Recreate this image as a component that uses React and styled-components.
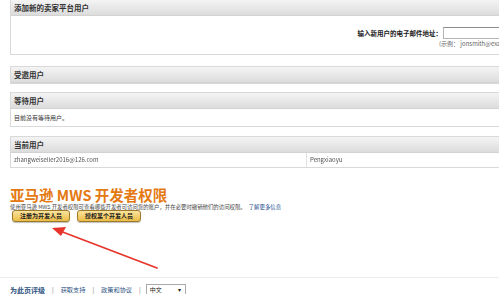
import React from "react";
import styled, { createGlobalStyle } from "styled-components";

const Global = createGlobalStyle`
  html, body { margin: 0; padding: 0; background: #fff; overflow: hidden; }
  body { font-family: "Noto Sans CJK SC", "Noto Sans", sans-serif; color: #333; }
`;

const Page = styled.div`
  position: relative;
  width: 499px;
  height: 294px;
  overflow: hidden;
`;

const Content = styled.div`
  margin-top: -1px;
  padding-left: 10px;
  width: 560px;
`;

const Panel = styled.div`
  border: 1px solid #d9d9d9;
  margin-bottom: ${(p) => p.$gap}px;
`;

const PanelHeader = styled.div`
  height: 15px;
  line-height: 15px;
  padding-left: 3px;
  background: linear-gradient(#f4f4f4, #dcdcdc);
  border-bottom: 1px solid #d2d2d2;
  font-size: 7.5px;
  font-weight: 700;
  color: #333;
`;

const PanelBody = styled.div`
  height: ${(p) => p.$h}px;
  padding-left: 3px;
  font-size: 6px;
  line-height: ${(p) => p.$h}px;
  color: #333;
`;

const FormBody = styled.div`
  height: 38px;
  padding: 11px 0 0 345px;
  box-sizing: border-box;
  display: grid;
  grid-template-columns: 87px 120px;
  grid-template-rows: 11px 10px;
  align-items: center;
`;

const FormLabel = styled.span`
  font-size: 6.5px;
  font-weight: 700;
  text-align: right;
  color: #222;
  white-space: nowrap;
  padding-right: 1px;
`;

const EmailInput = styled.div`
  height: 10px;
  border: 1px solid #b5b5b5;
  border-top-color: #8d8d8d;
  background: #fff;
`;

const Example = styled.span`
  grid-column: 2;
  margin-left: -4px;
  font-size: 6px;
  color: #666;
  white-space: nowrap;
`;

const UserRow = styled.div`
  display: grid;
  grid-template-columns: 295px 1fr;
  height: 14px;
  font-size: 6px;
`;

const UserCell = styled.div`
  padding-left: 3px;
  line-height: 14px;
  border-left: ${(p) => (p.$divider ? "1px solid #e2e2e2" : "none")};
`;

const Blurred = styled.span`
  filter: blur(0.7px);
  color: #555;
`;

const Title = styled.h1`
  margin: 19px 0 0 0;
  font-size: 14.5px;
  line-height: 16px;
  font-weight: 700;
  color: #e47911;
  font-family: "Noto Sans CJK SC", "Noto Sans", sans-serif;
`;

const Desc = styled.p`
  margin: 1px 0 0 0;
  height: 6px;
  font-size: 5.4px;
  line-height: 6px;
  color: #444;
  white-space: nowrap;
`;

const Link = styled.a`
  color: #1a4c8e;
  text-decoration: none;
  margin-left: 3px;
`;

const Buttons = styled.div`
  display: flex;
  gap: 7px;
  padding-left: 2px;
`;

const Button = styled.button`
  height: 12px;
  padding: 0 7px;
  border: 1px solid #9c7a2c;
  border-radius: 3px;
  background: linear-gradient(#fbe39d, #ecbd45);
  box-shadow: 0 1px 1px rgba(0, 0, 0, 0.25);
  font-family: "Noto Sans CJK SC", "Noto Sans", sans-serif;
  font-size: 6px;
  font-weight: 700;
  line-height: 10px;
  color: #222;
  white-space: nowrap;
`;

const Footer = styled.div`
  margin: 55px 0 0 -10px;
  border-top: 1px solid #ececec;
  padding: 5px 0 0 10px;
  display: flex;
  align-items: center;
  height: 13px;
  font-size: 6.2px;
`;

const FooterLink = styled.a`
  color: #2b4f80;
  font-weight: ${(p) => (p.$bold ? 700 : 400)};
  font-size: ${(p) => (p.$bold ? 7 : 6.2)}px;
  text-decoration: none;
`;

const Sep = styled.span`
  color: #777;
  margin: 0 7px;
`;

const Select = styled.div`
  width: 40px;
  height: 12px;
  margin-left: -2px;
  border: 1px solid #a9a9a9;
  box-sizing: border-box;
  display: flex;
  align-items: center;
  justify-content: space-between;
  padding: 0 4px 0 3px;
  font-size: 6px;
  color: #222;
`;

const Arrow = styled.svg`
  position: absolute;
  left: 0;
  top: 0;
  pointer-events: none;
`;

export default function App() {
  return (
    <Page>
      <Global />
      <Content>
        <Panel $gap={11}>
          <PanelHeader>添加新的卖家平台用户</PanelHeader>
          <FormBody>
            <FormLabel>输入新用户的电子邮件地址：</FormLabel>
            <EmailInput />
            <Example>(示例： jonsmith@example.com)</Example>
          </FormBody>
        </Panel>
        <Panel $gap={8}>
          <PanelHeader>受邀用户</PanelHeader>
        </Panel>
        <Panel $gap={9}>
          <PanelHeader>等待用户</PanelHeader>
          <PanelBody $h={17}>目前没有等待用户。</PanelBody>
        </Panel>
        <Panel $gap={0}>
          <PanelHeader>当前用户</PanelHeader>
          <UserRow>
            <UserCell>
              <Blurred>zhangweiseller2016@126.com</Blurred>
            </UserCell>
            <UserCell $divider>
              <Blurred>Pengxiaoyu</Blurred>
            </UserCell>
          </UserRow>
        </Panel>
        <Title>亚马逊 MWS 开发者权限</Title>
        <Desc>
          使用亚马逊 MWS 开发者权限可查看哪些开发者可访问您的账户，并在必要时撤销他们的访问权限。
          <Link>了解更多信息</Link>
        </Desc>
        <Buttons>
          <Button>注册为开发人员</Button>
          <Button>授权某个开发人员</Button>
        </Buttons>
        <Footer>
          <FooterLink $bold>为此页评级</FooterLink>
          <Sep>|</Sep>
          <FooterLink>获取支持</FooterLink>
          <Sep>|</Sep>
          <FooterLink>政策和协议</FooterLink>
          <Sep>|</Sep>
          <Select>
            <span>中文</span>
            <span>▾</span>
          </Select>
        </Footer>
      </Content>
      <Arrow width="499" height="294" viewBox="0 0 499 294">
        <line x1="157" y1="268" x2="60" y2="231" stroke="#e8352c" strokeWidth="1.8" strokeLinecap="round" />
        <polygon points="52,228 66,227 61,236" fill="#e8352c" />
      </Arrow>
    </Page>
  );
}
